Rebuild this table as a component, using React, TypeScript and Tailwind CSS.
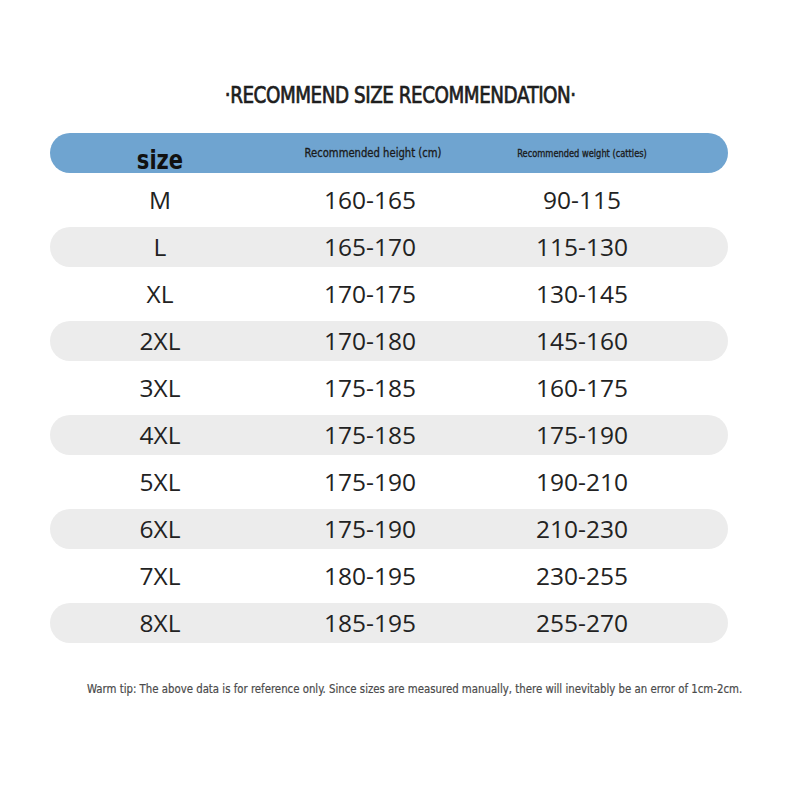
import React from 'react';

const ROWS: [string, string, string][] = [
  ['M', '160-165', '90-115'],
  ['L', '165-170', '115-130'],
  ['XL', '170-175', '130-145'],
  ['2XL', '170-180', '145-160'],
  ['3XL', '175-185', '160-175'],
  ['4XL', '175-185', '175-190'],
  ['5XL', '175-190', '190-210'],
  ['6XL', '175-190', '210-230'],
  ['7XL', '180-195', '230-255'],
  ['8XL', '185-195', '255-270'],
];

const condensed = "font-['DejaVu_Sans_Condensed','Liberation_Sans',sans-serif]";
const body = "font-['Open_Sans','Noto_Sans',sans-serif]";

const App: React.FC = () => {
  return (
    <div className="w-[800px] h-[800px] bg-white flex flex-col items-center">
      <h1 className={`${condensed} mt-[80px] text-[23px] leading-[30px] text-[#1e1e1e] tracking-[-0.5px] scale-x-[0.885] [-webkit-text-stroke:0.7px_#1e1e1e]`}>
        ·RECOMMEND SIZE RECOMMENDATION·
      </h1>

      <div className="mt-[23px] w-[678px] ml-[-22px] flex flex-col gap-[7px]">
        <div className="h-10 rounded-full bg-[#6fa4d0] grid grid-cols-[220px_200px_224px] items-center">
          <span className={`${condensed} text-center text-[26px] font-bold text-[#111] translate-y-[7px] scale-x-[0.9]`}>size</span>
          <span className={`${condensed} text-center text-[12px] text-[#1a1a1a] scale-x-[0.93] translate-x-[3px] whitespace-nowrap [-webkit-text-stroke:0.3px_#1a1a1a]`}>Recommended height (cm)</span>
          <span className={`${condensed} text-center text-[10px] text-[#1a1a1a] scale-x-[0.92] whitespace-nowrap [-webkit-text-stroke:0.3px_#1a1a1a]`}>Recommended weight (catties)</span>
        </div>
        {ROWS.map(([s, h, w], i) => (
          <div
            key={s}
            className={`h-10 rounded-full grid grid-cols-[220px_200px_224px] items-center ${body} text-[24.5px] text-[#222] ${i % 2 === 1 ? 'bg-[#ececec]' : ''}`}
          >
            <span className="text-center">{s}</span>
            <span className="text-center">{h}</span>
            <span className="text-center">{w}</span>
          </div>
        ))}
      </div>

      <p className={`${condensed} mt-[36px] ml-[30px] text-[13px] text-[#4a4a4a] scale-x-[0.87] whitespace-nowrap [-webkit-text-stroke:0.2px_#4a4a4a]`}>
        Warm tip: The above data is for reference only. Since sizes are measured manually, there will inevitably be an error of 1cm-2cm.
      </p>
    </div>
  );
};

export default App;
